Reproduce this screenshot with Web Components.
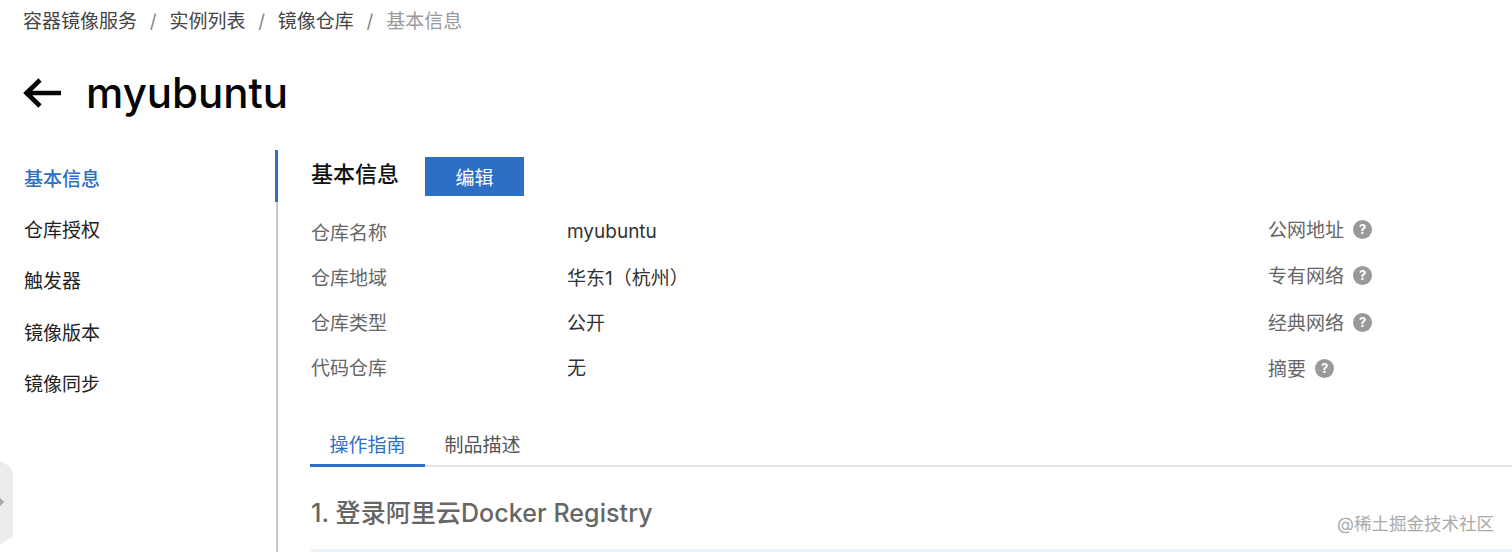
<!DOCTYPE html>
<html lang="zh">
<head>
<meta charset="utf-8">
<style>
html, body { margin: 0; height: 552px; overflow: hidden; background: #fff; }
body { font-family: Inter, "Noto Sans CJK SC", sans-serif; }
</style>
</head>
<body>
<repo-page></repo-page>
<script>
const FONT = 'Inter, "Noto Sans CJK SC", sans-serif'

class RepoBreadcrumb extends HTMLElement {
    constructor() {
        super()
        this.attachShadow({ mode: 'open' })
        this.shadowRoot.innerHTML = `
            <style>
                :host { display: flex; align-items: center; height: 44px; padding-left: 23px; font: 19px/44px ${FONT}; color: #444; }
                i { font-style: normal; color: #888; width: 32.4px; text-align: center; }
                .last { color: #999; }
            </style>
            <span>容器镜像服务</span><i>/</i><span>实例列表</span><i>/</i><span>镜像仓库</span><i>/</i><span class="last">基本信息</span>
        `
    }
}

class RepoTitle extends HTMLElement {
    constructor() {
        super()
        this.attachShadow({ mode: 'open' })
        this.shadowRoot.innerHTML = `
            <style>
                :host { display: flex; align-items: center; height: 98px; margin-bottom: 8px; padding-left: 23px; gap: 25px; font: 500 42px/1 ${FONT}; color: #050505; }
                svg { display: block; width: 38px; height: 30px; }
            </style>
            <svg viewBox="0 0 38 30"><path d="M38 15H4M17 2 3.5 15 17 28" fill="none" stroke="#050505" stroke-width="4.6"/></svg>
            <span>myubuntu</span>
        `
    }
}

class SideNav extends HTMLElement {
    constructor() {
        super()
        this.attachShadow({ mode: 'open' })
        const items = ['基本信息', '仓库授权', '触发器', '镜像版本', '镜像同步']
        this.shadowRoot.innerHTML = `
            <style>
                :host { display: block; width: 276px; flex: none; box-sizing: border-box; padding: 4px 0 0 24px; font: 19px/51px ${FONT}; color: #222; }
                div { height: 51.2px; }
                .active { color: #2c6fc4; font-weight: 500; }
            </style>
            ${items.map((t, i) => `<div class="${i === 0 ? 'active' : ''}">${t}</div>`).join('')}
        `
    }
}

class InfoRow extends HTMLElement {
    constructor() {
        super()
        this.attachShadow({ mode: 'open' })
        this.shadowRoot.innerHTML = `
            <style>
                :host { display: flex; height: 45px; align-items: center; font-size: 19px; color: #666; }
                .label { width: 256px; flex: none; }
                .value { color: #333; }
            </style>
            <span class="label">${this.getAttribute('label')}</span>
            <span class="value"><slot></slot></span>
        `
    }
}

class HelpRow extends HTMLElement {
    constructor() {
        super()
        this.attachShadow({ mode: 'open' })
        this.shadowRoot.innerHTML = `
            <style>
                :host { display: flex; height: 46.3px; align-items: center; gap: 9px; font-size: 19px; color: #666; }
                span { position: relative; top: -1px; }
                b { display: block; width: 19px; height: 19px; border-radius: 50%; background: #999; color: #fff; font: 700 13px/19px ${FONT}; text-align: center; }
            </style>
            <span><slot></slot></span><b>?</b>
        `
    }
}

class RepoTabs extends HTMLElement {
    constructor() {
        super()
        this.attachShadow({ mode: 'open' })
        this.shadowRoot.innerHTML = `
            <style>
                :host { display: flex; height: 38px; box-sizing: border-box; border-bottom: 2px solid #e2e4e7; font: 19px/34px ${FONT}; color: #555; }
                span { width: 115px; height: 38px; box-sizing: border-box; text-align: center; }
                .active { color: #2c6fc4; border-bottom: 3px solid #2c6fc4; }
            </style>
            <span class="active">操作指南</span><span>制品描述</span>
        `
    }
}

class BasicPanel extends HTMLElement {
    constructor() {
        super()
        this.attachShadow({ mode: 'open' })
        this.shadowRoot.innerHTML = `
            <style>
                :host { display: block; flex: 1; min-width: 0; height: 402px; position: relative; box-sizing: border-box; padding: 7px 0 0 33px; border-left: 2px solid #c9c9c9; }
                :host::before { content: ""; position: absolute; left: -3px; top: 0; width: 3px; height: 52px; background: #2c6fc4; }
                .head { display: flex; align-items: center; gap: 26px; height: 39px; font: 500 22px ${FONT}; color: #111; }
                .head span { padding-bottom: 9px; }
                button { width: 99px; height: 39px; border: 0; background: #2c6fc4; color: #fff; font: 19px ${FONT}; padding: 0; }
                .info { display: flex; margin-top: 13px; height: 220px; }
                .left { flex: 1; }
                .right { width: 244px; flex: none; margin-top: -2.5px; }
                repo-tabs { margin-left: -1px; }
                h2 { margin: 24px 0 0; font: 500 25px/44px ${FONT}; color: #666; letter-spacing: 0.07px; }
                .strip { height: 3px; margin-top: 14px; background: #eef3fa; }
            </style>
            <div class="head"><span>基本信息</span><button>编辑</button></div>
            <div class="info">
                <div class="left">
                    <info-row label="仓库名称">myubuntu</info-row>
                    <info-row label="仓库地域">华东1（杭州）</info-row>
                    <info-row label="仓库类型">公开</info-row>
                    <info-row label="代码仓库">无</info-row>
                </div>
                <div class="right">
                    <help-row>公网地址</help-row>
                    <help-row>专有网络</help-row>
                    <help-row>经典网络</help-row>
                    <help-row>摘要</help-row>
                </div>
            </div>
            <repo-tabs></repo-tabs>
            <h2>1. 登录阿里云Docker Registry</h2>
            <div class="strip"></div>
        `
    }
}

class RepoPage extends HTMLElement {
    constructor() {
        super()
        this.attachShadow({ mode: 'open' })
        this.shadowRoot.innerHTML = `
            <style>
                :host { display: block; position: relative; height: 552px; overflow: hidden; font-family: ${FONT}; }
                .body { display: flex; }
                .handle { position: absolute; left: 0; top: 461px; width: 13px; height: 84px; background: #ececec; clip-path: polygon(0 0, 70% 6%, 100% 14%, 100% 90%, 0 100%); }
                .handle::after { content: ""; position: absolute; left: -3px; top: 38px; width: 6px; height: 6px; background: #aaa; transform: rotate(45deg); }
                .mark { position: absolute; right: 18px; top: 512px; font-size: 17.5px; line-height: 24px; color: #aaa; }
            </style>
            <repo-breadcrumb></repo-breadcrumb>
            <repo-title></repo-title>
            <div class="body">
                <side-nav></side-nav>
                <basic-panel></basic-panel>
            </div>
            <div class="handle"></div>
            <div class="mark">@稀土掘金技术社区</div>
        `
    }
}

customElements.define('repo-breadcrumb', RepoBreadcrumb)
customElements.define('repo-title', RepoTitle)
customElements.define('side-nav', SideNav)
customElements.define('info-row', InfoRow)
customElements.define('help-row', HelpRow)
customElements.define('repo-tabs', RepoTabs)
customElements.define('basic-panel', BasicPanel)
customElements.define('repo-page', RepoPage)
</script>
</body>
</html>
